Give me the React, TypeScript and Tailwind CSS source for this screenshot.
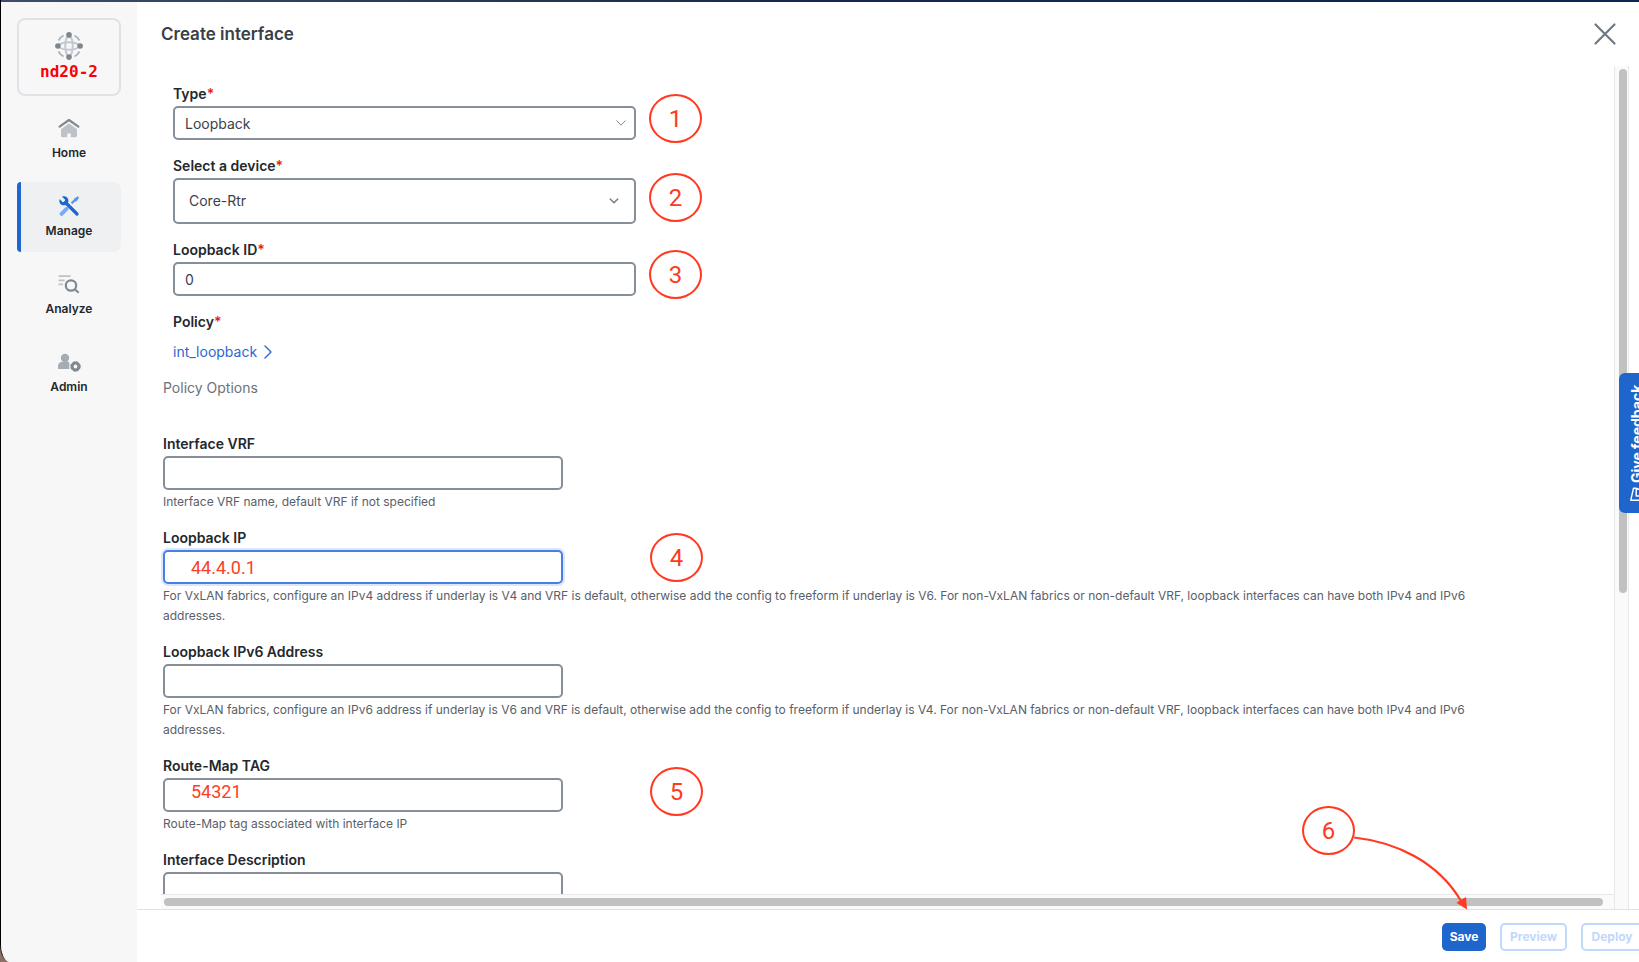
import type { ReactNode } from 'react';

function FabricIcon() {
  return (
    <svg viewBox="0 0 28 28" className="h-7 w-7" fill="none" aria-hidden="true">
      <g stroke="#aab2ba" strokeWidth="1.8">
        <path d="M3.500 8.500A12 12 0 0 1 8.500 3.500M19.500 3.500a12 12 0 0 1 5 5M24.500 19.500a12 12 0 0 1-5 5M8.500 24.500a12 12 0 0 1-5-5" />
      </g>
      <g stroke="#c3c8ce" strokeWidth="2">
        <path d="M3 14C7 9 21 9 25 14" />
        <path d="M3 14C7 19 21 19 25 14" />
        <path d="M14 3C9 7 9 21 14 25" />
        <path d="M14 3C19 7 19 21 14 25" />
      </g>
      <g fill="#7d8791">
        <circle cx="14" cy="2.9" r="2.8" />
        <circle cx="14" cy="25.1" r="2.8" />
        <circle cx="2.9" cy="14" r="2.8" />
        <circle cx="25.1" cy="14" r="2.8" />
      </g>
    </svg>
  );
}

function HomeIcon() {
  return (
    <svg viewBox="0 0 24 24" className="h-6 w-6" fill="none" aria-hidden="true">
      <path d="M12 7.200 4 13.200v6.200c0 1 .7 1.800 1.800 1.800h4.400v-3.600h3.600v3.600h4.400c1.100 0 1.800-.8 1.800-1.800v-6.200z" fill="#bdc2c9" />
      <path d="m2.600 10.600 9.400-6.600 9.400 6.600" stroke="#7f8993" strokeWidth="2.200" strokeLinecap="round" strokeLinejoin="round" />
    </svg>
  );
}

function ManageIcon() {
  return (
    <svg viewBox="0 0 24 24" className="h-6 w-6" fill="none" aria-hidden="true">
      <path d="m9.600 14.800-5 5" stroke="#7baaf7" strokeWidth="4" strokeLinecap="round" />
      <path d="m14.600 9.400 4.400-4.400" stroke="#5b94f0" strokeWidth="2.200" />
      <path d="m17.600 4.800 3.200-2 .8.800-2 3.200-1.400.2z" fill="#5b94f0" stroke="#5b94f0" strokeWidth="1" strokeLinejoin="round" />
      <path d="m8.500 8.500 11.500 11.500" stroke="#1f67d0" strokeWidth="3.200" strokeLinecap="round" />
      <path d="M5 2.700 8.200 5.800 7.600 7.600 5.800 8.200 2.700 5C1.800 7.300 2.600 9.300 4 10.400c1.500 1.100 3.300 1.200 4.800.5l2.200-2.200c.8-1.600.5-3.500-.7-4.900C8.900 2.300 6.900 1.900 5 2.700z" fill="#1f67d0" />
    </svg>
  );
}

function AnalyzeIcon() {
  return (
    <svg viewBox="0 0 24 24" className="h-6 w-6" fill="none" aria-hidden="true">
      <path d="M1.500 4.200h12M1.500 8.300h6M1.500 12.400h4.500" stroke="#bdc2c9" strokeWidth="1.800" />
      <circle cx="14" cy="13.500" r="5.200" stroke="#7f8993" strokeWidth="2.200" />
      <path d="m17.800 17.300 3.800 3.500" stroke="#7f8993" strokeWidth="2.200" />
    </svg>
  );
}

function AdminIcon() {
  return (
    <svg viewBox="0 0 24 24" className="h-6 w-6" fill="none" aria-hidden="true">
      <circle cx="8" cy="8" r="4.200" fill="#a5acb4" />
      <path d="M1 19v-3c0-2.600 2-4.300 4.500-4.300h5c1 0 1.800.3 1.800 1.200V19z" fill="#a5acb4" />
      <circle cx="18.500" cy="16.500" r="3.400" stroke="#7f8993" strokeWidth="3" />
      <circle cx="18.500" cy="16.500" r="4.700" stroke="#7f8993" strokeWidth="1" strokeDasharray="2.400 1.290" />
    </svg>
  );
}

function Chevron({ className, d }: { className: string; d: string }) {
  return (
    <svg viewBox="0 0 10 6" className={className} fill="none" aria-hidden="true">
      <path d={d} stroke="currentColor" strokeLinecap="round" strokeLinejoin="round" />
    </svg>
  );
}

function NavItem({ icon, label, active = false }: { icon: ReactNode; label: string; active?: boolean }) {
  return (
    <a
      href="#"
      className={
        'relative flex h-[70px] flex-col items-center gap-[5px] overflow-hidden rounded-l-[4px] rounded-r-lg pt-3 text-xs leading-4 font-semibold text-[#23282e] ' +
        (active ? 'bg-[#eff0f2]' : '')
      }
    >
      {active && <span className="absolute inset-y-0 left-0 w-1 bg-[#1f67d0]" />}
      {icon}
      <span>{label}</span>
    </a>
  );
}

function Step({ n, className }: { n: number; className: string }) {
  return (
    <span
      className={
        'absolute flex h-[49px] w-[53px] items-center justify-center rounded-[50%] border-2 border-[#ff3a20] font-["Roboto",sans-serif] text-2xl leading-6 font-normal text-[#ff3a20] ' +
        className
      }
    >
      {n}
    </span>
  );
}

const box = 'block w-full rounded-[5px] border-2 bg-white outline-none';
const control = box + ' border-[#868f99] text-sm text-[#3c4249]';
const labelStyle = 'text-sm leading-5 font-semibold text-[#23282e]';

function Label({ id, children, required = false }: { id: string; children: ReactNode; required?: boolean }) {
  return (
    <label htmlFor={id} className={labelStyle}>
      {children}
      {required && <span className="text-[#e2231a]">*</span>}
    </label>
  );
}

function PolicyField({
  id,
  label,
  help,
  value = '',
  inputClass = 'border-[#868f99]',
  step,
}: {
  id: string;
  label: string;
  help?: string;
  value?: string;
  inputClass?: string;
  step?: ReactNode;
}) {
  return (
    <div className="relative flex flex-col gap-0.5">
      <Label id={id}>{label}</Label>
      <div className="w-[400px]">
        <input
          id={id}
          type="text"
          defaultValue={value}
          className={'h-[34px] pl-[26px] font-["Roboto",sans-serif] text-lg text-[#fc4025] ' + box + ' ' + inputClass}
        />
      </div>
      {help && <p className="text-xs leading-5 text-[#596069]">{help}</p>}
      {step}
    </div>
  );
}

export default function App() {
  return (
    <div className="relative h-screen overflow-hidden bg-[#8a7066] font-['Inter',sans-serif]">
      <div className="flex h-full flex-col overflow-hidden rounded-bl-[10px_18px] border-l border-black bg-white">
        <div className="h-0.5 shrink-0 bg-linear-to-r from-[#3d4c70] via-[#14284f] to-[#0c2650]" />
        <div className="flex min-h-0 flex-1">
          <nav className="flex w-[136px] shrink-0 flex-col gap-2 bg-[#f7f7f7] px-4 pt-4">
            <div className="flex h-[78px] flex-col items-center rounded-lg border-2 border-[#dfe3e8] pt-3">
              <FabricIcon />
              <span className="font-['DejaVu_Sans_Mono',monospace] text-base leading-6 font-bold text-[#fb0007]">nd20-2</span>
            </div>
            <NavItem icon={<HomeIcon />} label="Home" />
            <NavItem icon={<ManageIcon />} label="Manage" active />
            <NavItem icon={<AnalyzeIcon />} label="Analyze" />
            <NavItem icon={<AdminIcon />} label="Admin" />
          </nav>

          <main className="flex min-w-0 flex-1 flex-col">
            <header className="flex h-16 shrink-0 items-center justify-between pr-[18px] pl-6">
              <h1 className="text-[17px] leading-6 font-semibold text-[#3a4047]">Create interface</h1>
              <button type="button" aria-label="Close" className="p-1 text-[#6f7983]">
                <svg viewBox="0 0 24 24" className="h-6 w-6" fill="none" aria-hidden="true">
                  <path d="m2.500 2.500 19 19M21.500 2.500l-19 19" stroke="currentColor" strokeWidth="2.200" strokeLinecap="round" />
                </svg>
              </button>
            </header>

            <div className="mr-2.5 ml-6 grid min-h-0 flex-1 grid-cols-[minmax(0,1fr)_15px] grid-rows-[minmax(0,1fr)_15px]">
              <form className="overflow-hidden pt-[18px] pl-0.5">
                <div className="flex w-[473px] flex-col gap-4 pl-2.5">
                  <div className="relative flex flex-col gap-0.5">
                    <Label id="type" required>Type</Label>
                    <div className="relative">
                      <select id="type" className={'h-[34px] appearance-none pt-0.5 pl-2.5 ' + control}>
                        <option>Loopback</option>
                      </select>
                      <Chevron className="pointer-events-none absolute top-3.5 right-2.5 h-1.5 w-2.5 text-[#7f8993]" d="M.8.800 5 5.200 9.200.8" />
                    </div>
                    <Step n={1} className="top-2.5 left-full ml-[13px]" />
                  </div>
                  <div className="relative flex flex-col gap-0.5">
                    <Label id="device" required>Select a device</Label>
                    <div className="relative">
                      <select id="device" className={'h-[46px] appearance-none pl-3.5 ' + control}>
                        <option>Core-Rtr</option>
                      </select>
                      <Chevron className="pointer-events-none absolute top-5 right-[17px] h-1.5 w-2.5 stroke-[1.4] text-[#6f7983]" d="M1.200 1 5 4.800 8.800 1" />
                    </div>
                    <Step n={2} className="top-[17px] left-full ml-[13px]" />
                  </div>
                  <div className="relative flex flex-col gap-0.5">
                    <Label id="loopback-id" required>Loopback ID</Label>
                    <input id="loopback-id" type="text" defaultValue="0" className={'h-[34px] pl-2.5 ' + control} />
                    <Step n={3} className="top-2.5 left-full ml-[13px]" />
                  </div>
                  <div className="flex flex-col items-start gap-2.5">
                    <span className={labelStyle}>
                      Policy<span className="text-[#e2231a]">*</span>
                    </span>
                    <a href="#" className="flex items-center gap-[7px] text-sm leading-5 text-[#2b67cf]">
                      int_loopback
                      <svg viewBox="0 0 8 14" className="h-3.5 w-2" fill="none" aria-hidden="true">
                        <path d="m1 1 6 6-6 6" stroke="currentColor" strokeWidth="1.400" strokeLinecap="round" strokeLinejoin="round" />
                      </svg>
                    </a>
                  </div>
                </div>

                <h2 className="mt-4 text-sm leading-5 text-[#6b727b]">Policy Options</h2>

                <div className="mt-9 flex max-w-[1320px] flex-col gap-4">
                  <PolicyField id="vrf" label="Interface VRF" help="Interface VRF name, default VRF if not specified" />
                  <PolicyField
                    id="ip"
                    label="Loopback IP"
                    value="44.4.0.1"
                    inputClass="border-[#4680e2] ring-2 ring-[#dce7fb]"
                    help="For VxLAN fabrics, configure an IPv4 address if underlay is V4 and VRF is default, otherwise add the config to freeform if underlay is V6. For non-VxLAN fabrics or non-default VRF, loopback interfaces can have both IPv4 and IPv6 addresses."
                    step={<Step n={4} className="top-[5px] left-[487px]" />}
                  />
                  <PolicyField
                    id="ipv6"
                    label="Loopback IPv6 Address"
                    help="For VxLAN fabrics, configure an IPv6 address if underlay is V6 and VRF is default, otherwise add the config to freeform if underlay is V4. For non-VxLAN fabrics or non-default VRF, loopback interfaces can have both IPv4 and IPv6 addresses."
                  />
                  <PolicyField
                    id="tag"
                    label="Route-Map TAG"
                    value="54321"
                    inputClass="border-[#868f99] pb-2"
                    help="Route-Map tag associated with interface IP"
                    step={<Step n={5} className="top-[11px] left-[487px]" />}
                  />
                  <PolicyField id="description" label="Interface Description" />
                </div>
              </form>
              <div className="row-span-2 border-x border-[#e8e8e8] bg-[#fafafa] px-[3px] pt-[3px]">
                <div className="ml-px h-[62.4%] w-2 rounded-full bg-[#c1c1c1]" />
              </div>
              <div className="border-t border-[#e8e8e8] bg-[#fafafa] pt-[3px] pr-[11px] pl-[3px]">
                <div className="h-2 rounded-full bg-[#c1c1c1]" />
              </div>
            </div>

            <footer className="relative -mr-1.5 flex h-[53px] shrink-0 items-start justify-end gap-3.5 border-t border-[#e2e2e2] pt-[13px] text-xs font-bold">
              <div className="relative">
                <button type="button" className="h-7 w-11 rounded-[5px] bg-[#1f66cc] text-white">Save</button>
                <Step n={6} className="right-[131px] bottom-[96px]" />
                <svg viewBox="0 0 120 80" className="pointer-events-none absolute -top-[90px] right-[12px] h-20 w-[120px]" fill="none" aria-hidden="true">
                  <path d="M0 4.500C42 9 84 29 107 68" stroke="#ff3a20" strokeWidth="2.200" />
                  <path d="m102.500 69.800 9.500-5.800 1 12.500z" fill="#ff3a20" />
                </svg>
              </div>
              <button type="button" disabled className="h-7 w-[67px] rounded-[5px] border-2 border-[#c0d8fb] text-[#c0d8fb]">Preview</button>
              <button type="button" disabled className="h-7 w-16 rounded-[5px] border-2 border-[#c0d8fb] pr-0.5 text-[#c0d8fb]">Deploy</button>
            </footer>
          </main>
        </div>
      </div>

      <button
        type="button"
        className="absolute top-[373px] -right-3 flex h-[140px] w-8 rotate-180 items-center gap-1 rounded-r-md bg-[#1f66cc] pt-3 pr-1 text-sm leading-5 font-bold text-white [writing-mode:vertical-rl]"
      >
        <svg viewBox="0 0 14 14" className="h-3.5 w-3.5 rotate-180" fill="none" aria-hidden="true">
          <path d="M13.500 13.200H.8L3.500 1.200H6l7.500 2.600M6.200 1.500v7.500h7.300" stroke="currentColor" strokeWidth="1.400" strokeLinejoin="round" />
        </svg>
        Give feedback
      </button>
    </div>
  );
}
